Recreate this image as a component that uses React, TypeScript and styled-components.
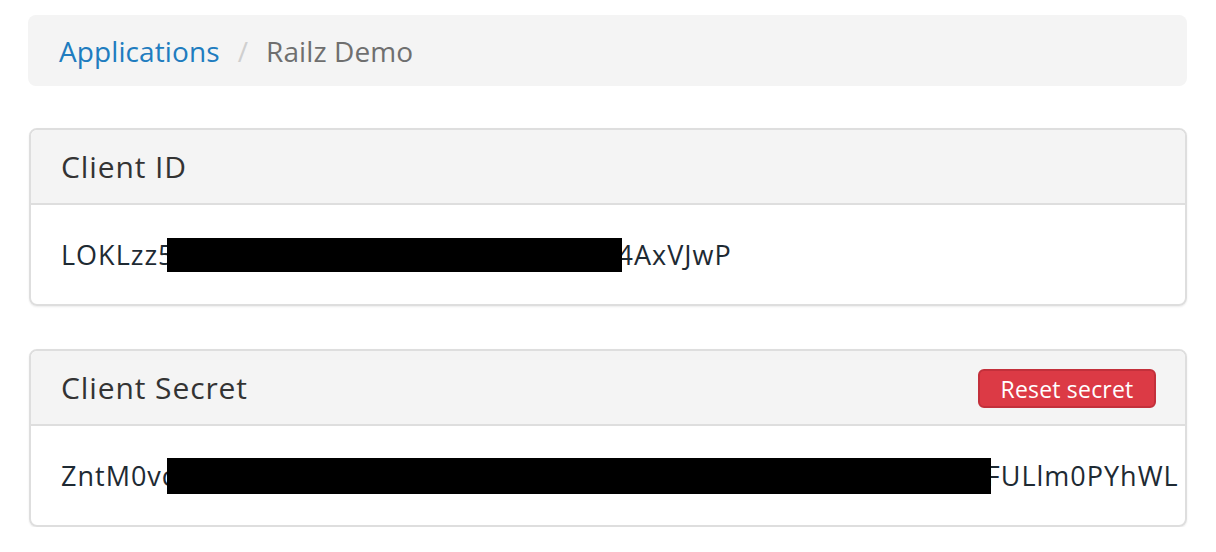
import React from "react";
import styled, { createGlobalStyle } from "styled-components";

const Global = createGlobalStyle`
  html, body { margin: 0; padding: 0; background: #fff; }
  body { font-family: "Open Sans", Lato, sans-serif; }
`;

const Page = styled.div`
  padding: 15px 29px 0 28px;
  display: flex;
  flex-direction: column;
`;

const Breadcrumb = styled.nav`
  height: 71px;
  box-sizing: border-box;
  background: #f4f4f4;
  border-radius: 8px;
  display: flex;
  align-items: center;
  padding-left: 31px;
  font-size: 28px;
  letter-spacing: 0.1px;
  gap: 18px;
`;

const Crumb = styled.span<{ $active?: boolean }>`
  color: ${(p) => (p.$active ? "#6f6f6f" : "#207cbf")};
`;

const Sep = styled.span`
  color: #cfcfcf;
`;

const Card = styled.section<{ $top: number }>`
  margin-top: ${(p) => p.$top}px;
  margin-left: 1px;
  border: 2px solid #dedede;
  border-radius: 8px;
  box-shadow: 0 1px 2px rgba(0, 0, 0, 0.08);
`;

const CardHeader = styled.header`
  height: 75px;
  box-sizing: border-box;
  background: #f4f4f4;
  border-bottom: 2px solid #dedede;
  border-radius: 6px 6px 0 0;
  display: flex;
  align-items: center;
  justify-content: space-between;
  padding: 0 29px 0 30px;
`;

const Title = styled.h2`
  margin: 0;
  font-weight: 400;
  font-size: 30px;
  letter-spacing: 0.9px;
  color: #333;
`;

const ResetButton = styled.button`
  height: 39px;
  width: 178px;
  padding: 0;
  margin-top: 2px;
  background: #dc3a45;
  border: 2px solid #c3303b;
  border-radius: 6px;
  color: #fff;
  font-family: inherit;
  font-size: 23px;
  letter-spacing: 0.2px;
`;

const CardBody = styled.div`
  height: 99px;
  display: flex;
  align-items: center;
  padding-left: 30px;
  font-size: 27px;
  letter-spacing: 1px;
  color: #1e2a33;
  white-space: nowrap;
`;

const Redact = styled.span<{ $w: number; $h: number; $shift: number }>`
  display: inline-block;
  flex: none;
  width: ${(p) => p.$w}px;
  height: ${(p) => p.$h}px;
  background: #000;
  position: relative;
  z-index: 1;
  margin-left: ${(p) => p.$shift}px;
  margin-right: -5px;
`;

export default function App() {
  return (
    <>
      <Global />
      <Page>
        <Breadcrumb>
          <Crumb>Applications</Crumb>
          <Sep>/</Sep>
          <Crumb $active>Railz Demo</Crumb>
        </Breadcrumb>
        <Card $top={42}>
          <CardHeader>
            <Title>Client ID</Title>
          </CardHeader>
          <CardBody>
            <span>LOKLzz5</span>
            <Redact $w={455} $h={34} $shift={-7} />
            <span>4AxVJwP</span>
          </CardBody>
        </Card>
        <Card $top={43}>
          <CardHeader>
            <Title>Client Secret</Title>
            <ResetButton>Reset secret</ResetButton>
          </CardHeader>
          <CardBody>
            <span>ZntM0vc</span>
            <Redact $w={824} $h={36} $shift={-9} />
            <span>FULlm0PYhWL</span>
          </CardBody>
        </Card>
      </Page>
    </>
  );
}
